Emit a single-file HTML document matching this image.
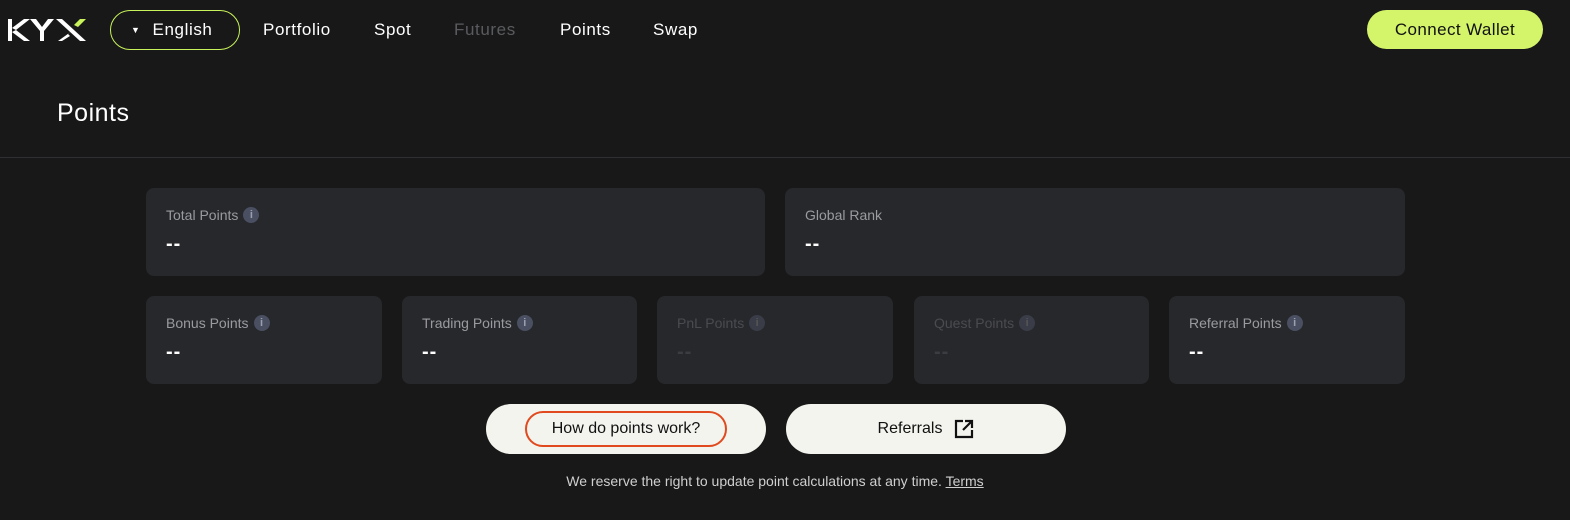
<!DOCTYPE html>
<html><head><style>
*{box-sizing:border-box;margin:0;padding:0}
body{width:1570px;height:520px;background:#181818;font-family:"Liberation Sans",sans-serif;color:#fff;position:relative;overflow:hidden}
.abs{position:absolute}
.nav{font-size:17px;top:20px;letter-spacing:0.6px}
.card{position:absolute;background:#27282c;border-radius:8px}
.lbl{position:absolute;left:20px;top:19px;font-size:14px;color:#9a9ba0;display:flex;align-items:center}
.i{display:inline-block;width:16px;height:16px;border-radius:50%;background:#4a5062;color:#9aa0b0;font-size:11px;font-weight:bold;text-align:center;line-height:16px;margin-left:5px}
.val{position:absolute;left:20px;top:45px;font-size:20px;color:#fff;font-weight:bold;letter-spacing:1px}
.dim .lbl{color:#4a4b50}.dim .val{color:#3c3d42}.dim .i{background:#3a3d48;color:#555}
.btn{position:absolute;top:404px;height:50px;width:280px;border-radius:25px;background:#f4f4ef;color:#111;font-size:16px;display:flex;align-items:center;justify-content:center}
</style></head><body>
<svg class="abs" style="left:8px;top:17px" width="78" height="26" viewBox="0 0 78 26">
<g fill="#fff"><rect x="0" y="2" width="4" height="22"/><polygon points="4,11 16,2 22,2 8,13"/><polygon points="8,13 22,24 16,24 4,15"/>
<polygon points="22,2 28,2 34,10 40,2 46,2 36,14 36,24 32,24 32,14"/>
<polygon points="48,2 54,2 78,24 72,24"/><polygon points="60,17 64,14 50,24 54,24 62,19"/></g>
<polygon points="72,2 78,2 70,10 66,8" fill="#c9f35a"/></svg>
<div class="abs" style="left:110px;top:10px;width:130px;height:40px;border:1.5px solid #c9f35a;border-radius:20px;font-size:17px;letter-spacing:0.6px;display:flex;align-items:center;padding-left:20px"><span style="font-size:9px;margin-right:12px">▼</span>English</div>
<div class="abs nav" style="left:263px">Portfolio</div>
<div class="abs nav" style="left:374px">Spot</div>
<div class="abs nav" style="left:454px;color:#5a5b5f">Futures</div>
<div class="abs nav" style="left:560px">Points</div>
<div class="abs nav" style="left:653px">Swap</div>
<div class="abs" style="left:1367px;top:10px;width:176px;height:39px;background:#d4f56a;border-radius:20px;color:#111;font-size:17px;text-align:center;line-height:39px;letter-spacing:0.4px">Connect Wallet</div>
<div class="abs" style="left:57px;top:99px;font-size:25px;letter-spacing:0.5px">Points</div>
<div class="abs" style="left:0;top:157px;width:1570px;height:1px;background:#2e2f33"></div>
<div class="card" style="left:146px;top:188px;width:619px;height:88px"><div class="lbl">Total Points<span class="i">i</span></div><div class="val">--</div></div>
<div class="card" style="left:785px;top:188px;width:620px;height:88px"><div class="lbl">Global Rank</div><div class="val">--</div></div>
<div class="card" style="left:146px;top:296px;width:236px;height:88px"><div class="lbl">Bonus Points<span class="i">i</span></div><div class="val">--</div></div>
<div class="card" style="left:402px;top:296px;width:235px;height:88px"><div class="lbl">Trading Points<span class="i">i</span></div><div class="val">--</div></div>
<div class="card dim" style="left:657px;top:296px;width:236px;height:88px"><div class="lbl">PnL Points<span class="i">i</span></div><div class="val">--</div></div>
<div class="card dim" style="left:914px;top:296px;width:235px;height:88px"><div class="lbl">Quest Points<span class="i">i</span></div><div class="val">--</div></div>
<div class="card" style="left:1169px;top:296px;width:236px;height:88px"><div class="lbl">Referral Points<span class="i">i</span></div><div class="val">--</div></div>
<div class="btn" style="left:486px"><div style="border:2px solid #e04a1e;border-radius:18px;width:202px;height:36px;display:flex;align-items:center;justify-content:center">How do points work?</div></div>
<div class="btn" style="left:786px">Referrals<svg style="margin-left:12px" width="20" height="20" viewBox="0 0 20 20" fill="none" stroke="#111" stroke-width="2.2"><path d="M9 2H2v16h16v-7"/><path d="M11 2h7v7M18 2l-9 9"/></svg></div>
<div class="abs" style="left:0;width:1550px;top:473px;text-align:center;font-size:14px;color:#cfcfcf">We reserve the right to update point calculations at any time. <u>Terms</u></div>
</body></html>
